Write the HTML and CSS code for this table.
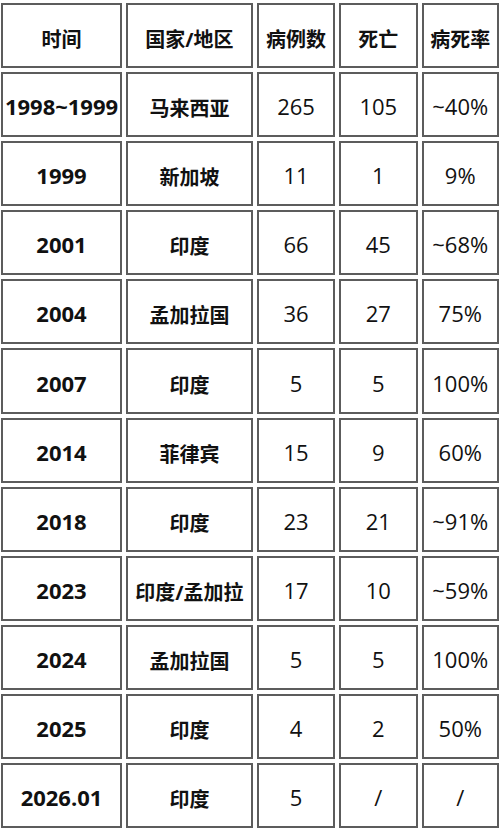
FILE: index.html
```html
<!DOCTYPE html>
<html lang="zh-CN">
<head>
<meta charset="utf-8">
<title>尼帕病毒疫情</title>
<link rel="stylesheet" href="styles.css">
</head>
<body>
<div class="grid">
  <div class="cell zh">时间</div><div class="cell zh">国家/地区</div><div class="cell zh">病例数</div><div class="cell zh">死亡</div><div class="cell zh">病死率</div>
  <div class="cell b">1998~1999</div><div class="cell zh">马来西亚</div><div class="cell">265</div><div class="cell">105</div><div class="cell">~40%</div>
  <div class="cell b">1999</div><div class="cell zh">新加坡</div><div class="cell">11</div><div class="cell">1</div><div class="cell">9%</div>
  <div class="cell b">2001</div><div class="cell zh">印度</div><div class="cell">66</div><div class="cell">45</div><div class="cell">~68%</div>
  <div class="cell b">2004</div><div class="cell zh">孟加拉国</div><div class="cell">36</div><div class="cell">27</div><div class="cell">75%</div>
  <div class="cell b">2007</div><div class="cell zh">印度</div><div class="cell">5</div><div class="cell">5</div><div class="cell">100%</div>
  <div class="cell b">2014</div><div class="cell zh">菲律宾</div><div class="cell">15</div><div class="cell">9</div><div class="cell">60%</div>
  <div class="cell b">2018</div><div class="cell zh">印度</div><div class="cell">23</div><div class="cell">21</div><div class="cell">~91%</div>
  <div class="cell b">2023</div><div class="cell zh">印度/孟加拉</div><div class="cell">17</div><div class="cell">10</div><div class="cell">~59%</div>
  <div class="cell b">2024</div><div class="cell zh">孟加拉国</div><div class="cell">5</div><div class="cell">5</div><div class="cell">100%</div>
  <div class="cell b">2025</div><div class="cell zh">印度</div><div class="cell">4</div><div class="cell">2</div><div class="cell">50%</div>
  <div class="cell b">2026.01</div><div class="cell zh">印度</div><div class="cell">5</div><div class="cell">/</div><div class="cell">/</div>
</div>
</body>
</html>
```
FILE: styles.css
```css
html, body {
  margin: 0;
  padding: 0;
  background: #ffffff;
}
body {
  font-family: "Open Sans", "Noto Sans CJK SC", sans-serif;
  color: #111111;
}
.grid {
  display: grid;
  grid-template-columns: 121px 127px 78px 78.5px 77.5px;
  grid-auto-rows: 65.1px;
  gap: 4px;
  padding: 3px 1px 0 1px;
}
.cell {
  box-sizing: border-box;
  border: 2px solid #5c5c5c;
  display: flex;
  align-items: center;
  justify-content: center;
  font-size: 22px;
  line-height: 1;
  padding-top: 3px;
  white-space: nowrap;
}
.zh {
  font-size: 20px;
  font-weight: 700;
  padding-top: 9px;
}
.b {
  font-weight: 700;
}
```
